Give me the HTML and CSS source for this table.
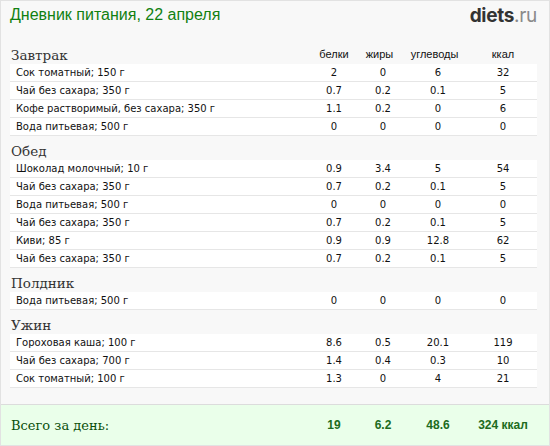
FILE: index.html
```html
<!DOCTYPE html>
<html lang="ru">
<head>
<meta charset="utf-8">
<title>Дневник питания</title>
<link rel="stylesheet" href="styles.css">
</head>
<body>
<div class="page">
  <div class="top">
    <h1 class="title">Дневник питания, 22 апреля</h1>
    <div class="logo"><b>diets</b>.ru</div>
  </div>

  <div class="meal">
    <div class="meal-head">
      <span class="meal-name">Завтрак</span>
      <span class="col-h c1">белки</span>
      <span class="col-h c2">жиры</span>
      <span class="col-h c3">углеводы</span>
      <span class="col-h c4">ккал</span>
    </div>
    <div class="row"><span class="name">Сок томатный; 150 г</span><span class="v">2</span><span class="v">0</span><span class="v">6</span><span class="v">32</span></div>
    <div class="row"><span class="name">Чай без сахара; 350 г</span><span class="v">0.7</span><span class="v">0.2</span><span class="v">0.1</span><span class="v">5</span></div>
    <div class="row"><span class="name">Кофе растворимый, без сахара; 350 г</span><span class="v">1.1</span><span class="v">0.2</span><span class="v">0</span><span class="v">6</span></div>
    <div class="row"><span class="name">Вода питьевая; 500 г</span><span class="v">0</span><span class="v">0</span><span class="v">0</span><span class="v">0</span></div>
  </div>

  <div class="meal">
    <div class="meal-head"><span class="meal-name">Обед</span></div>
    <div class="row"><span class="name">Шоколад молочный; 10 г</span><span class="v">0.9</span><span class="v">3.4</span><span class="v">5</span><span class="v">54</span></div>
    <div class="row"><span class="name">Чай без сахара; 350 г</span><span class="v">0.7</span><span class="v">0.2</span><span class="v">0.1</span><span class="v">5</span></div>
    <div class="row"><span class="name">Вода питьевая; 500 г</span><span class="v">0</span><span class="v">0</span><span class="v">0</span><span class="v">0</span></div>
    <div class="row"><span class="name">Чай без сахара; 350 г</span><span class="v">0.7</span><span class="v">0.2</span><span class="v">0.1</span><span class="v">5</span></div>
    <div class="row"><span class="name">Киви; 85 г</span><span class="v">0.9</span><span class="v">0.9</span><span class="v">12.8</span><span class="v">62</span></div>
    <div class="row"><span class="name">Чай без сахара; 350 г</span><span class="v">0.7</span><span class="v">0.2</span><span class="v">0.1</span><span class="v">5</span></div>
  </div>

  <div class="meal">
    <div class="meal-head"><span class="meal-name">Полдник</span></div>
    <div class="row"><span class="name">Вода питьевая; 500 г</span><span class="v">0</span><span class="v">0</span><span class="v">0</span><span class="v">0</span></div>
  </div>

  <div class="meal">
    <div class="meal-head"><span class="meal-name">Ужин</span></div>
    <div class="row"><span class="name">Гороховая каша; 100 г</span><span class="v">8.6</span><span class="v">0.5</span><span class="v">20.1</span><span class="v">119</span></div>
    <div class="row"><span class="name">Чай без сахара; 700 г</span><span class="v">1.4</span><span class="v">0.4</span><span class="v">0.3</span><span class="v">10</span></div>
    <div class="row"><span class="name">Сок томатный; 100 г</span><span class="v">1.3</span><span class="v">0</span><span class="v">4</span><span class="v">21</span></div>
  </div>

  <div class="total">
    <span class="total-label">Всего за день:</span>
    <span class="t">19</span>
    <span class="t">6.2</span>
    <span class="t">48.6</span>
    <span class="t">324 ккал</span>
  </div>
</div>
</body>
</html>
```

FILE: styles.css
```css
html, body {
  margin: 0;
  padding: 0;
  background: #ffffff;
}

.page {
  box-sizing: border-box;
  width: 550px;
  height: 446px;
  border: 1px solid #e2e2e2;
  background: #f8f8f8;
  display: flex;
  flex-direction: column;
  overflow: hidden;
}

.top {
  height: 39px;
  display: flex;
  justify-content: space-between;
  align-items: flex-start;
  padding: 0 12px 0 9px;
}

.title {
  margin: 4px 0 0 0;
  font-family: "Liberation Sans", Arial, sans-serif;
  font-weight: normal;
  font-size: 16px;
  line-height: 20px;
  color: #118011;
}

.logo {
  margin-top: 3px;
  font-family: Inter, "Open Sans", sans-serif;
  font-size: 19px;
  line-height: 23px;
  color: #8a8a8a;
  letter-spacing: -0.3px;
}

.logo b {
  color: #333333;
  font-weight: 700;
}

.meal {
  padding: 0 12px 0 9px;
}

.meal-head,
.row {
  display: grid;
  grid-template-columns: 300px 48px 50px 60px 70px;
}

.meal-head {
  height: 24px;
  align-items: end;
}

.meal-name {
  font-family: "DejaVu Serif", serif;
  font-size: 13.5px;
  line-height: 18px;
  color: #333333;
  padding-left: 1px;
}

.col-h {
  font-family: "Liberation Sans", Arial, sans-serif;
  font-size: 11px;
  line-height: 15px;
  color: #111111;
  text-align: center;
  padding-bottom: 2px;
}

.c2, .c3 {
  padding-right: 7px;
}

.row {
  height: 17px;
  background: #ffffff;
  border-bottom: 1px solid #e6e6e6;
  font-family: "DejaVu Sans", Verdana, sans-serif;
  font-size: 10px;
  line-height: 18px;
  color: #111111;
}

.name {
  padding-left: 6px;
  white-space: nowrap;
}

.v {
  text-align: center;
}

.total {
  margin-top: auto;
  height: 40px;
  border-top: 1px solid #dcdcdc;
  background: #eaffea;
  display: grid;
  grid-template-columns: 309px 48px 50px 60px 70px;
  align-items: center;
}

.total-label {
  font-family: "DejaVu Serif", serif;
  font-size: 13px;
  color: #0b4f0b;
  padding-left: 10px;
}

.t {
  font-family: "Liberation Sans", Arial, sans-serif;
  font-weight: bold;
  font-size: 12px;
  color: #206b20;
  text-align: center;
}
```
